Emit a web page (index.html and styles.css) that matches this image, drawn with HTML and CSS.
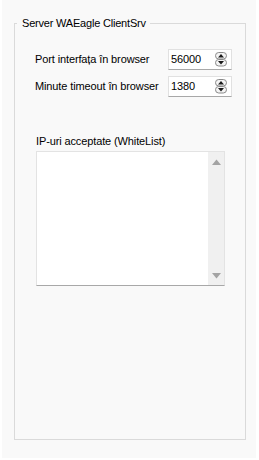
FILE: index.html
```html
<!DOCTYPE html>
<html lang="ro">
<head>
<meta charset="utf-8">
<link rel="stylesheet" href="styles.css">
</head>
<body>
<div class="panel">
  <div class="group">
    <span class="group-title">Server WAEagle ClientSrv</span>
    <div class="rows">
      <div class="row">
        <span class="label">Port interfața în browser</span>
        <div class="spin">
          <span class="spin-value">56000</span>
          <svg class="spin-btns" width="12" height="15" viewBox="0 0 12 15">
            <rect x="0.5" y="0.5" width="11" height="6.5" rx="3.2" fill="#f4f4f4" stroke="#8a8a8a"/>
            <rect x="0.5" y="7.5" width="11" height="6.5" rx="3.2" fill="#f4f4f4" stroke="#8a8a8a"/>
            <path d="M3 5.5 L6 2 L9 5.5 Z" fill="#1a1a1a"/>
            <path d="M3 9 L6 12.5 L9 9 Z" fill="#1a1a1a"/>
          </svg>
        </div>
      </div>
      <div class="row">
        <span class="label">Minute timeout în browser</span>
        <div class="spin">
          <span class="spin-value">1380</span>
          <svg class="spin-btns" width="12" height="15" viewBox="0 0 12 15">
            <rect x="0.5" y="0.5" width="11" height="6.5" rx="3.2" fill="#f4f4f4" stroke="#8a8a8a"/>
            <rect x="0.5" y="7.5" width="11" height="6.5" rx="3.2" fill="#f4f4f4" stroke="#8a8a8a"/>
            <path d="M3 5.5 L6 2 L9 5.5 Z" fill="#1a1a1a"/>
            <path d="M3 9 L6 12.5 L9 9 Z" fill="#1a1a1a"/>
          </svg>
        </div>
      </div>
    </div>
    <div class="list-label">IP-uri acceptate (WhiteList)</div>
    <div class="listbox">
      <div class="list-content"></div>
      <div class="scrollbar">
        <svg width="9" height="6" viewBox="0 0 9 6"><path d="M0 6 L4.5 0.5 L9 6 Z" fill="#a3a3a3"/></svg>
        <svg width="9" height="6" viewBox="0 0 9 6"><path d="M0 0 L4.5 5.5 L9 0 Z" fill="#a3a3a3"/></svg>
      </div>
    </div>
  </div>
</div>
</body>
</html>
```
FILE: styles.css
```css
html, body {
  margin: 0;
  padding: 0;
  background: #ffffff;
}
body {
  font-family: "Liberation Sans", Arial, sans-serif;
  font-size: 11px;
  letter-spacing: -0.12px;
  color: #000000;
}
.panel {
  margin-left: 2px;
  width: 254px;
  height: 458px;
  background: #f9f9f9;
  padding-top: 23px;
  box-sizing: border-box;
}
.group {
  position: relative;
  margin-left: 12px;
  width: 232px;
  height: 417px;
  box-sizing: border-box;
  border: 1px solid #dadada;
  padding: 25px 13px 0 20px;
}
.group-title {
  position: absolute;
  top: -7px;
  left: 2px;
  padding: 0 4px 0 5px;
  line-height: 13px;
  letter-spacing: -0.2px;
  background: #f9f9f9;
}
.rows {
  display: flex;
  flex-direction: column;
  gap: 6px;
}
.row {
  display: flex;
  align-items: center;
  justify-content: space-between;
  height: 21px;
}
.label {
  line-height: 13px;
}
.spin {
  width: 64px;
  height: 21px;
  box-sizing: border-box;
  background: #ffffff;
  border: 1px solid #e1e1e1;
  border-bottom-color: #a8a8a8;
  display: flex;
  align-items: center;
  justify-content: space-between;
  padding: 0 4px 0 2px;
}
.spin-value {
  line-height: 13px;
}
.spin-btns {
  display: block;
}
.list-label {
  margin-top: 38px;
  margin-left: 1px;
  line-height: 13px;
}
.listbox {
  margin-top: 3px;
  margin-left: 1px;
  width: 189px;
  height: 135px;
  box-sizing: border-box;
  background: #ffffff;
  border: 1px solid #e3e3e3;
  border-bottom-color: #a8a8a8;
  display: flex;
}
.list-content {
  flex: 1;
}
.scrollbar {
  width: 16px;
  background: #f0f0f0;
  display: flex;
  flex-direction: column;
  justify-content: space-between;
  align-items: center;
  padding: 7px 0 6px;
}
.scrollbar svg {
  display: block;
}
```
